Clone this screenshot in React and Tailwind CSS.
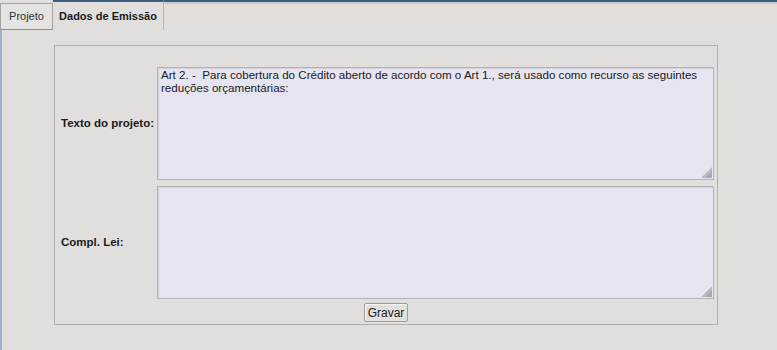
import React from 'react';

const Grip = () => (
    <svg className="absolute right-[1px] bottom-[1px]" width="11" height="11" viewBox="0 0 11 11">
        <polygon points="11,0 11,11 0,11" fill="#b9b8bf" />
        <polygon points="11,4 11,11 4,11" fill="#a9a8b0" />
    </svg>
);

const Campo = ({ label, value }) => (
    <div className="flex items-center">
        <div className="w-[102px] pl-[6px] font-bold text-[11.5px] text-[#1b1b1b]">{label}</div>
        <div className="relative w-[557px] h-[113px] bg-[#e6e4f1] border border-[#b3b2ba] shadow-[inset_1px_1px_0_#d2d1da]">
            <textarea
                readOnly
                value={value}
                className="w-full h-full resize-none bg-transparent outline-none px-[3px] py-[1px] text-[11.6px] leading-[12.5px] text-[#202020]"
                style={{ fontFamily: '"Liberation Sans", Arial, sans-serif' }}
            />
            <Grip />
        </div>
    </div>
);

const App = () => {
    return (
        <div
            className="w-[777px] h-[350px] bg-[#e0dfdd] overflow-hidden text-[#1b1b1b]"
            style={{ fontFamily: '"Liberation Sans", Arial, sans-serif' }}
        >
            {/* Tabs */}
            <div className="flex items-end h-[30px]">
                <div className="w-[53px] h-[27px] flex items-center justify-center bg-[#e4e3e1] border border-[#a3a3a3] border-b-[#8f8f8f] text-[11px] text-[#333]">
                    Projeto
                </div>
                <div className="w-[111px] h-[30px] border-t-2 border-t-[#3b5d7d] border-r border-r-[#b5b5b5] flex items-center justify-center font-bold text-[11px]">
                    Dados de Emissão
                </div>
                <div className="flex-1 h-[30px] border-t-2 border-t-[#3b5d7d]">
                    <div className="h-[2px] bg-[#cbcbcb]" />
                </div>
            </div>

            {/* Conteúdo */}
            <div className="h-[320px] border-l-2 border-l-[#9db0c6] pt-[15px] pl-[52px]">
                <div className="w-[664px] h-[280px] border border-[#b0b0b0] pt-[21px] pr-[3px]">
                    <div className="flex flex-col gap-[6px]">
                        <Campo
                            label="Texto do projeto:"
                            value="Art 2. -  Para cobertura do Crédito aberto de acordo com o Art 1., será usado como recurso as seguintes reduções orçamentárias:"
                        />
                        <Campo label="Compl. Lei:" value="" />
                    </div>
                    <div className="flex justify-center pt-[4px] pl-[3px]">
                        <button className="h-[19px] px-[3px] bg-[#e2e1df] border border-[#9c9c9c] rounded-[2px] shadow-[inset_1px_1px_0_#f4f4f4] text-[12px] text-[#222] leading-none">
                            Gravar
                        </button>
                    </div>
                </div>
            </div>
        </div>
    );
};

export default App;
